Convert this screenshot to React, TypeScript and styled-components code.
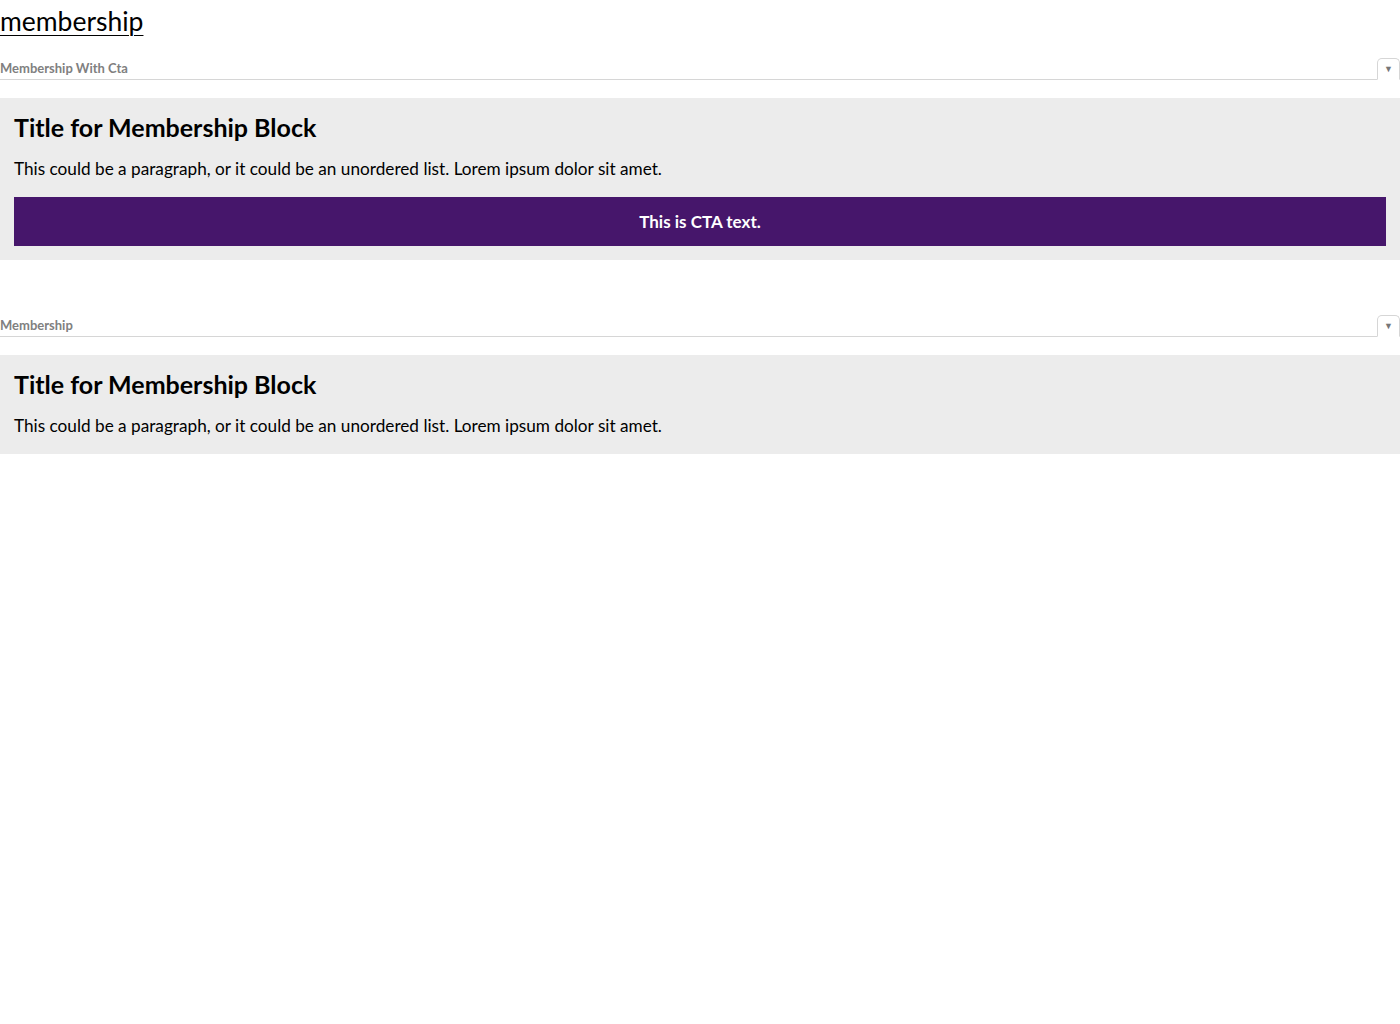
import React from "react";
import styled, { createGlobalStyle } from "styled-components";

const GlobalStyle = createGlobalStyle`
  body {
    margin: 0;
    background: #fff;
    font-family: "Lato", "Open Sans", sans-serif;
    color: #000;
  }
`;

const Page = styled.div`
  display: flex;
  flex-direction: column;
`;

const PageTitle = styled.a`
  display: block;
  font-size: 26.5px;
  line-height: 42px;
  color: #000;
  text-decoration: underline;
  text-decoration-thickness: 1px;
  text-underline-offset: 4px;
`;

const Section = styled.section`
  display: flex;
  flex-direction: column;
  margin-top: 11px;
  margin-bottom: 39px;
`;

const SectionHeader = styled.div`
  display: flex;
  align-items: flex-end;
  justify-content: space-between;
  border-bottom: 1px solid #d6d6d6;
  height: 26px;
`;

const SectionLabel = styled.span`
  font-size: 13px;
  font-weight: 700;
  color: #808080;
  padding-bottom: 3px;
`;

const Toggle = styled.button`
  width: 23px;
  height: 22px;
  margin-bottom: -1px;
  border: 1px solid #d6d6d6;
  border-bottom-color: #fff;
  border-radius: 5px 5px 0 0;
  background: #fff;
  color: #777;
  font-size: 9px;
  padding: 0;
  display: flex;
  align-items: center;
  justify-content: center;
`;

const Block = styled.div`
  margin-top: 18px;
  background: #ececec;
  padding: 14px;
  display: flex;
  flex-direction: column;
`;

const BlockTitle = styled.h2`
  margin: 0;
  font-size: 25px;
  font-weight: 700;
  line-height: 30px;
`;

const BlockText = styled.p`
  margin: 15px 0 2px;
  font-size: 17.2px;
  line-height: 24px;
`;

const Cta = styled.a`
  margin-top: 14px;
  height: 49px;
  background: #46166b;
  color: #fff;
  font-size: 17px;
  font-weight: 700;
  display: flex;
  align-items: center;
  justify-content: center;
  text-decoration: none;
`;

interface IBlock {
  label: string;
  title: string;
  text: string;
  cta?: string;
}

const blocks: IBlock[] = [
  {
    label: "Membership With Cta",
    title: "Title for Membership Block",
    text: "This could be a paragraph, or it could be an unordered list. Lorem ipsum dolor sit amet.",
    cta: "This is CTA text.",
  },
  {
    label: "Membership",
    title: "Title for Membership Block",
    text: "This could be a paragraph, or it could be an unordered list. Lorem ipsum dolor sit amet.",
  },
];

export default function App() {
  return (
    <>
      <GlobalStyle />
      <Page>
        <PageTitle>membership</PageTitle>
        {blocks.map((item, index) => (
          <Section key={index}>
            <SectionHeader>
              <SectionLabel>{item.label}</SectionLabel>
              <Toggle>▼</Toggle>
            </SectionHeader>
            <Block>
              <BlockTitle>{item.title}</BlockTitle>
              <BlockText>{item.text}</BlockText>
              {item.cta ? <Cta>{item.cta}</Cta> : <></>}
            </Block>
          </Section>
        ))}
      </Page>
    </>
  );
}
